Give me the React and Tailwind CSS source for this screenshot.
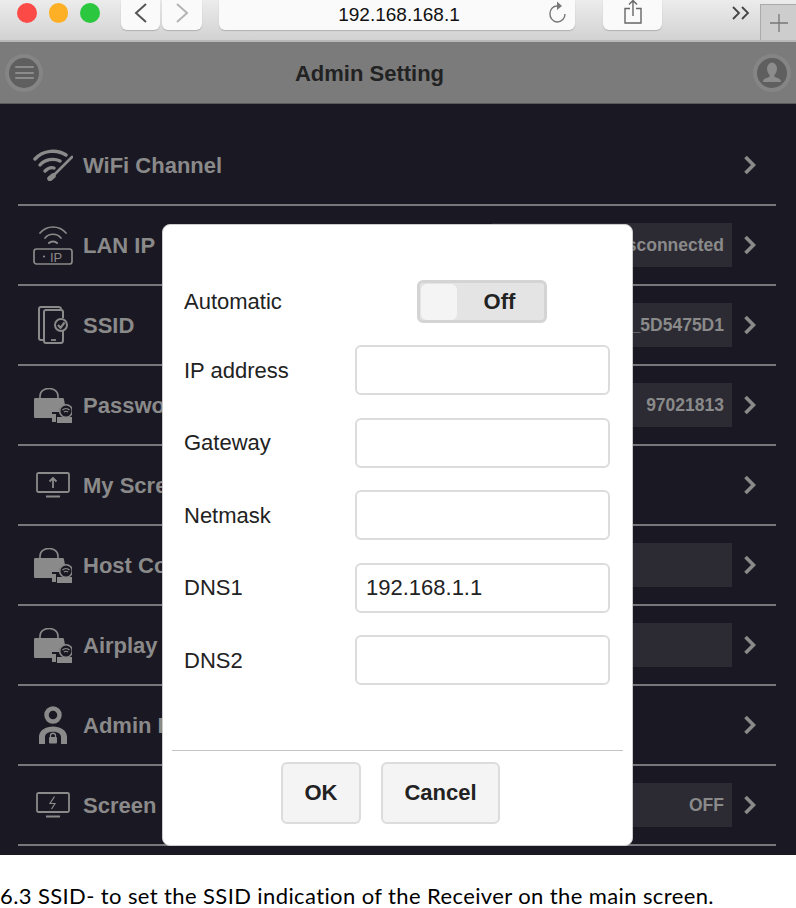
import React from "react";

function Wifi() {
  return (
    <svg width="40" height="32" viewBox="0 0 40 32" fill="none" stroke="#8a8a8a" strokeLinecap="round">
      <path d="M2 10 C 10 1, 24 0, 33 6" strokeWidth="3.4" />
      <path d="M7 16 C 12 10, 21 9, 27 12" strokeWidth="3.4" />
      <path d="M12 22 C 15 19, 18 18, 21 19" strokeWidth="3.4" />
      <path d="M39 8 L 20 27" strokeWidth="2.6" />
      <path d="M20 27 L 17 29.5" strokeWidth="5.5" />
    </svg>
  );
}

function LanIp() {
  return (
    <svg width="40" height="40" viewBox="0 0 40 40" fill="none" stroke="#8a8a8a">
      <path d="M7 8 C 14 0, 26 0, 33 8" strokeWidth="1.7" strokeLinecap="round" />
      <path d="M12 13 C 16 8, 24 8, 28 13" strokeWidth="1.7" strokeLinecap="round" />
      <path d="M16 18 C 18 16, 22 16, 24 18" strokeWidth="2" strokeLinecap="round" />
      <rect x="1" y="24" width="38" height="15" rx="2.5" strokeWidth="1.7" />
      <circle cx="11" cy="31.5" r="1.1" fill="#8a8a8a" stroke="none" />
      <text x="17" y="36.5" fontSize="13" fill="#8a8a8a" stroke="none">IP</text>
    </svg>
  );
}

function Ssid() {
  return (
    <svg width="30" height="38" viewBox="0 0 30 38" fill="none" stroke="#8a8a8a" strokeWidth="2">
      <path d="M5 34 H3 C 2 34 1 33 1 32 V3 C 1 2 2 1 3 1 H20 C 22 1 23 2 23 3" />
      <path d="M25 25 V34 C 25 36 24 37 23 37 H8 C 7 37 6 36 6 35 V6 C 6 5 7 4 8 4 H23 C 24 4 25 5 25 6 V12" />
      <path d="M13 34 H18" strokeWidth="1.8" />
      <circle cx="23" cy="19" r="6" strokeWidth="2" fill="#1a1822" />
      <path d="M20 19 L22.5 21.8 L26.5 16.5" strokeWidth="2.2" />
    </svg>
  );
}

function Lock() {
  return (
    <svg width="38" height="35" viewBox="0 0 38 35">
      <path d="M6 10 V8 C 6 -2, 24 -2, 24 8 V10" fill="none" stroke="#8a8a8a" strokeWidth="1.6" />
      <path d="M1.5 10 H28.5 C 29.5 10 30 10.5 30 11.5 L31 17 C 27 18 25 20 25 24 H18 V30 H1.5 C 0.5 30 0 29.5 0 28.5 V11.5 C 0 10.5 0.5 10 1.5 10 Z" fill="#8a8a8a" />
      <rect x="18" y="26" width="4" height="8" fill="#8a8a8a" />
      <rect x="23" y="29" width="15" height="6" fill="#8a8a8a" />
      <circle cx="32" cy="23" r="6.3" fill="#1a1822" stroke="#8a8a8a" strokeWidth="1.6" />
      <path d="M28.5 22 C 30.5 20, 33.5 20, 35.5 22 M30 24.2 C 31 23.2, 33 23.2, 34 24.2" fill="none" stroke="#8a8a8a" strokeWidth="1.2" />
    </svg>
  );
}

function UploadScreen() {
  return (
    <svg width="34" height="26" viewBox="0 0 34 26" fill="none" stroke="#8a8a8a">
      <rect x="1" y="1" width="32" height="19" rx="1.5" strokeWidth="1.8" />
      <path d="M10 24.5 H24" strokeWidth="2" />
      <path d="M17 16 V6 M13.5 9.5 L17 6 L20.5 9.5" strokeWidth="1.8" />
    </svg>
  );
}

function AdminUser() {
  return (
    <svg width="28" height="38" viewBox="0 0 28 38" fill="none">
      <circle cx="14" cy="9" r="6.5" stroke="#8a8a8a" strokeWidth="4.5" />
      <path d="M0 38 V31 C 0 17, 28 17, 28 31 V38 H22 V31 C 22 24, 6 24, 6 31 V38 Z" fill="#8a8a8a" />
      <rect x="10" y="31" width="8" height="6.5" rx="1" fill="#8a8a8a" />
      <path d="M11.5 31 V29.5 C 11.5 26.5, 16.5 26.5, 16.5 29.5 V31" stroke="#8a8a8a" strokeWidth="1.3" />
    </svg>
  );
}

function BoltScreen() {
  return (
    <svg width="34" height="26" viewBox="0 0 34 26" fill="none" stroke="#8a8a8a">
      <rect x="1" y="1" width="32" height="19" rx="1.5" strokeWidth="1.8" />
      <path d="M10 24.5 H24" strokeWidth="2" />
      <path d="M18.5 4.5 L14 11.5 H19 L15.5 17" strokeWidth="1.2" />
    </svg>
  );
}

const rows = [
  { label: "WiFi Channel", icon: <Wifi /> },
  { label: "LAN IP", icon: <LanIp />, value: "Disconnected" },
  { label: "SSID", icon: <Ssid />, value: "EZCast_5D5475D1" },
  { label: "Password", icon: <Lock />, value: "97021813" },
  { label: "My Screen", icon: <UploadScreen /> },
  { label: "Host Control", icon: <Lock />, value: " " },
  { label: "Airplay", icon: <Lock />, value: " " },
  { label: "Admin Password", icon: <AdminUser /> },
  { label: "Screen Saver", icon: <BoltScreen />, value: "OFF" },
];

function Row({ label, icon, value }) {
  return (
    <div className="flex h-20 items-center border-b-2 border-[#77767b] pl-[15px] pr-5">
      <div className="flex w-10 justify-center">{icon}</div>
      <span className="ml-2.5 flex-1 text-[22px] font-bold text-[#8a8a8a]">{label}</span>
      {value && (
        <span className="flex h-11 w-[240px] items-center justify-end bg-[#2c2a33] pr-2 text-[17.5px] font-bold text-[#8a8a8a]">
          {value}
        </span>
      )}
      <svg className="ml-3" width="12" height="20" viewBox="0 0 12 20" fill="none" stroke="#8a8a8a" strokeWidth="3.6">
        <path d="M1.5 2 L9.5 10 L1.5 18" />
      </svg>
    </div>
  );
}

function Field({ label, value = "" }) {
  return (
    <div className="flex items-center">
      <label className="w-[171px] text-[22px] text-[#222]">{label}</label>
      <input
        readOnly
        value={value}
        className="h-[50px] w-[255px] rounded-md border-2 border-[#dcdcdc] bg-white pl-[9px] text-[22px] text-[#222]"
      />
    </div>
  );
}

function Dialog() {
  return (
    <div className="absolute left-[162px] top-[120px] h-[622px] w-[471px] rounded-lg border border-[#ccc] bg-white">
      <div className="flex flex-col gap-[22.5px] pl-[21px] pt-[55px]">
        <div className="flex h-[42.5px] items-start">
          <label className="w-[171px] self-center text-[22px] text-[#222]">Automatic</label>
          <div className="ml-[62px] flex h-[43px] w-[130px] shrink-0 items-center rounded-md border-[3px] border-[#d4d4d4] bg-[#e4e4e4] pl-[1px]">
            <div className="h-[36px] w-[36px] rounded-md bg-[#f4f4f4]" />
            <span className="flex-1 pr-0.5 text-center text-[22px] font-bold text-[#222]">Off</span>
          </div>
        </div>
        <Field label="IP address" />
        <Field label="Gateway" />
        <Field label="Netmask" />
        <Field label="DNS1" value="192.168.1.1" />
        <Field label="DNS2" />
      </div>
      <div className="mx-[9px] mt-[64.5px] border-t border-[#c4c4c4]" />
      <div className="flex gap-5 pl-[118px] pt-[11px]">
        <button className="h-[62px] w-20 rounded-md border-2 border-[#dcdcdc] bg-[#f4f4f4] text-[22px] font-bold text-[#222]">OK</button>
        <button className="h-[62px] w-[119px] rounded-md border-2 border-[#dcdcdc] bg-[#f4f4f4] text-[22px] font-bold text-[#222]">Cancel</button>
      </div>
    </div>
  );
}

export default function App() {
  return (
    <div className="h-[908px] w-[796px] overflow-hidden bg-white font-['Liberation_Sans',Arial,sans-serif]">
      {/* browser toolbar */}
      <div className="flex h-[42px] border-b-2 border-[#b8b8b8] bg-gradient-to-b from-[#ececec] to-[#d2d2d2]">
        <div className="flex items-start gap-3 pl-[17px] pt-[3px]">
          <span className="h-[19.5px] w-[19.5px] rounded-full bg-[#fc4a47]" />
          <span className="h-[19.5px] w-[19.5px] rounded-full bg-[#fdb025]" />
          <span className="h-[19.5px] w-[19.5px] rounded-full bg-[#2ac73f]" />
        </div>
        <div className="ml-[21.5px] flex h-[30px] gap-0.5">
          <div className="flex w-[39px] items-center justify-center rounded-b-md bg-[#fafafa] pb-1 shadow-[0_1px_1px_#b0b0b0]">
            <svg width="13" height="20" viewBox="0 0 13 20" fill="none" stroke="#555" strokeWidth="2"><path d="M12 1 L2 10 L12 19" /></svg>
          </div>
          <div className="flex w-[40px] items-center justify-center rounded-b-md bg-[#fafafa] pb-1 shadow-[0_1px_1px_#b0b0b0]">
            <svg width="13" height="20" viewBox="0 0 13 20" fill="none" stroke="#b4b4b4" strokeWidth="2"><path d="M1 1 L11 10 L1 19" /></svg>
          </div>
        </div>
        <div className="relative ml-[17px] flex h-[30px] w-[356px] items-center justify-center rounded-b-md bg-[#fafafa] pl-[4px] text-[19px] text-[#111] shadow-[0_1px_1px_#b0b0b0]">
          192.168.168.1
          <svg className="absolute right-[8px] top-[1px]" width="20" height="24" viewBox="0 0 20 24" fill="none" stroke="#777" strokeWidth="1.4">
            <path d="M11 5 C 1 4, 0 20, 10 21 C 15 21, 18 17, 18 13" />
            <path d="M10 0.5 L15 5 L10 9 Z" fill="#777" stroke="none" />
          </svg>
        </div>
        <div className="ml-7 flex h-[30px] w-[59px] items-start justify-center rounded-b-md bg-[#fafafa] shadow-[0_1px_1px_#b0b0b0]">
          <svg width="18" height="24" viewBox="0 0 18 24" fill="none" stroke="#666" strokeWidth="1.4">
            <path d="M6 8.5 H1 V23 H17 V8.5 H12" />
            <path d="M9 16 V0.5 M5 4.5 L9 0.5 L13 4.5" />
          </svg>
        </div>
        <svg className="ml-[70px] mt-1.5" width="18" height="14" viewBox="0 0 18 14" fill="none" stroke="#444" strokeWidth="1.8">
          <path d="M1 1 L7 7 L1 13 M10 1 L16 7 L10 13" />
        </svg>
        <div className="ml-2.5 mt-1 flex h-[36px] flex-1 items-center justify-center border border-b-0 border-r-0 border-[#aaa] bg-[#cdcdcd]">
          <svg width="18" height="18" viewBox="0 0 18 18" stroke="#777" strokeWidth="1.3"><path d="M9 0 V18 M0 9 H18" /></svg>
        </div>
      </div>

      {/* app header */}
      <div className="flex h-[62px] items-center justify-between border-b border-[#5a5a5a] bg-[#7b7b7b] px-[5px]">
        <div className="flex h-[38px] w-[38px] flex-col items-center justify-center gap-[3.5px] rounded-full border-[4.5px] border-[#858585] bg-[#5f5f5f]">
          <span className="h-[2px] w-[19px] rounded-full bg-[#8c8c8c]" />
          <span className="h-[2px] w-[19px] rounded-full bg-[#8c8c8c]" />
          <span className="h-[2px] w-[19px] rounded-full bg-[#8c8c8c]" />
        </div>
        <span className="mr-[57px] pt-0.5 text-[22px] font-bold text-[#222]">Admin Setting</span>
        <div className="flex h-[38px] w-[38px] items-center justify-center rounded-full border-[4.5px] border-[#858585] bg-[#5f5f5f]">
          <svg width="20" height="22" viewBox="0 0 20 22" fill="#8c8c8c">
            <ellipse cx="10" cy="7" rx="5" ry="6.5" />
            <path d="M7.5 12 H12.5 V15 C 15 16, 19 16, 19 20 H1 C 1 16, 5 16, 7.5 15 Z" />
          </svg>
        </div>
      </div>

      {/* settings list + dialog */}
      <div className="relative h-[751px] bg-[#1a1822]">
        <div className="ml-[18px] mr-5 pt-[22px]">
          {rows.map((r) => (
            <Row key={r.label} {...r} />
          ))}
        </div>
        <Dialog />
      </div>

      <p className="whitespace-nowrap pt-[33px] font-['Lato',sans-serif] text-[22px] leading-4 tracking-[0.39px] text-black">
        6.3 SSID- to set the SSID indication of the Receiver on the main screen.
      </p>
    </div>
  );
}
